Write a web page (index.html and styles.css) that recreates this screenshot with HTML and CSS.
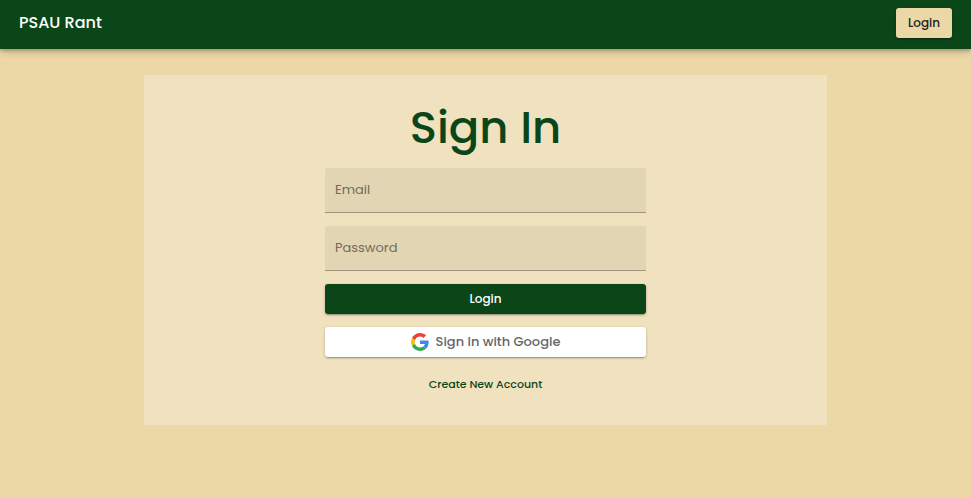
FILE: index.html
```html
<!DOCTYPE html>
<html lang="en">
<head>
<meta charset="utf-8">
<meta name="viewport" content="width=device-width, initial-scale=1">
<title>PSAU Rant</title>
<link rel="stylesheet" href="styles.css">
</head>
<body>
<header class="app-bar">
  <a class="brand" href="#">PSAU Rant</a>
  <button class="button button-bar" type="button">Login</button>
</header>
<main class="card">
  <h1 class="title">Sign In</h1>
  <form class="form">
    <div class="field">
      <label class="field-label" for="email">Email</label>
      <input class="field-input" id="email" type="email" autocomplete="off">
    </div>
    <div class="field">
      <label class="field-label" for="password">Password</label>
      <input class="field-input" id="password" type="password" autocomplete="off">
    </div>
    <button class="button button-primary" type="submit">Login</button>
    <button class="button button-google" type="button">
      <svg class="google-icon" viewBox="0 0 48 48" aria-hidden="true">
        <path fill="#EA4335" d="M24 9.5c3.54 0 6.71 1.22 9.21 3.6l6.85-6.85C35.9 2.38 30.47 0 24 0 14.62 0 6.51 5.38 2.56 13.22l7.98 6.19C12.43 13.72 17.74 9.5 24 9.5z"/>
        <path fill="#4285F4" d="M46.98 24.55c0-1.57-.15-3.09-.38-4.55H24v9.02h12.94c-.58 2.96-2.26 5.48-4.78 7.18l7.73 6c4.51-4.18 7.09-10.36 7.09-17.65z"/>
        <path fill="#FBBC05" d="M10.53 28.59c-.48-1.45-.76-2.99-.76-4.59s.27-3.14.76-4.59l-7.98-6.19C.92 16.46 0 20.12 0 24c0 3.88.92 7.54 2.56 10.78l7.97-6.19z"/>
        <path fill="#34A853" d="M24 48c6.48 0 11.93-2.13 15.89-5.81l-7.73-6c-2.15 1.45-4.92 2.3-8.16 2.3-6.26 0-11.57-4.22-13.47-9.91l-7.98 6.19C6.51 42.62 14.62 48 24 48z"/>
      </svg>
      <span>Sign In with Google</span>
    </button>
  </form>
  <a class="create-link" href="#">Create New Account</a>
</main>
</body>
</html>
```
FILE: styles.css
```css
* {
  box-sizing: border-box;
}

body {
  margin: 0;
  min-height: 100vh;
  background: #ebd8a6;
  font-family: Poppins, Inter, "Liberation Sans", sans-serif;
}

.app-bar {
  display: flex;
  align-items: flex-start;
  justify-content: space-between;
  padding: 8px 19px 11px;
  background: #0b4619;
  box-shadow: 0 2px 3px rgba(0, 0, 0, 0.2), 0 3px 8px rgba(0, 0, 0, 0.16);
}

.brand {
  color: #fff;
  font-size: 16px;
  font-weight: 500;
  line-height: 30px;
  text-decoration: none;
}

.button {
  display: flex;
  align-items: center;
  justify-content: center;
  gap: 7px;
  height: 30px;
  padding: 0 12px;
  border: 0;
  border-radius: 3px;
  font-family: inherit;
  font-size: 12px;
  font-weight: 500;
  cursor: pointer;
  box-shadow: 0 2px 1px -1px rgba(0, 0, 0, 0.2), 0 1px 3px rgba(0, 0, 0, 0.25);
}

.button-bar {
  background: #ebd8a6;
  color: #222;
}

.button-primary {
  background: #0b4619;
  color: #fff;
}

.button-google {
  background: #fff;
  color: #666;
  font-size: 13px;
}

.google-icon {
  width: 18px;
  height: 18px;
}

.card {
  display: flex;
  flex-direction: column;
  align-items: center;
  width: 70.4%;
  margin: 26px auto 0;
  padding: 24px 24px 32px;
  background: #f0e1bf;
}

.title {
  margin: 0 0 12px;
  color: #0b4619;
  font-size: 45px;
  font-weight: 500;
  line-height: 57px;
}

.form {
  display: grid;
  gap: 13px;
  width: 100%;
  max-width: 321px;
}

.field {
  display: grid;
  align-items: center;
}

.field-label,
.field-input {
  grid-area: 1 / 1;
}

.field-label {
  z-index: 1;
  padding: 0 10px 2px;
  color: #716b5a;
  font-size: 13px;
  pointer-events: none;
}

.field-input {
  width: 100%;
  height: 45px;
  padding: 16px 10px 4px;
  border: 0;
  border-bottom: 1px solid #a0947c;
  border-radius: 3px 3px 0 0;
  background: #e2d5b3;
  font-family: inherit;
  font-size: 13px;
}

.create-link {
  margin-top: 19px;
  color: #0b4619;
  font-size: 11px;
  font-weight: 500;
  line-height: 17px;
  text-decoration: none;
}
```
